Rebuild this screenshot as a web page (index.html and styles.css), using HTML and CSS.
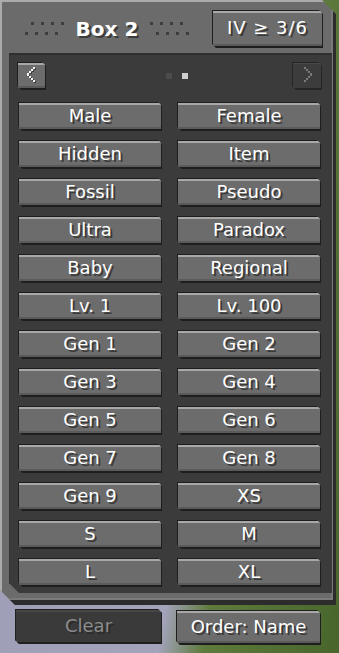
FILE: index.html
```html
<!DOCTYPE html>
<html lang="en">
<head>
    <meta charset="UTF-8">
    <meta name="viewport" content="width=device-width, initial-scale=1.0">
    <link rel="stylesheet" href="styles.css">
    <title>Box 2</title>
</head>
<body>
    <div class="panel">
        <div class="panel-head">
            <div class="title">
                <svg class="dots" width="40" height="16" viewBox="0 0 40 16">
                    <rect x="7" y="1" width="3" height="3"/><rect x="17" y="1" width="3" height="3"/>
                    <rect x="27" y="1" width="3" height="3"/><rect x="37" y="1" width="3" height="3"/>
                    <rect x="1" y="11" width="3" height="3"/><rect x="11" y="11" width="3" height="3"/>
                    <rect x="21" y="11" width="3" height="3"/><rect x="31" y="11" width="3" height="3"/>
                </svg>
                <span class="title-text">Box 2</span>
                <svg class="dots" width="40" height="16" viewBox="0 0 40 16">
                    <rect x="0" y="1" width="3" height="3"/><rect x="10" y="1" width="3" height="3"/>
                    <rect x="20" y="1" width="3" height="3"/><rect x="30" y="1" width="3" height="3"/>
                    <rect x="6" y="11" width="3" height="3"/><rect x="16" y="11" width="3" height="3"/>
                    <rect x="26" y="11" width="3" height="3"/><rect x="36" y="11" width="3" height="3"/>
                </svg>
            </div>
            <button class="btn iv-btn">IV ≥ 3/6</button>
        </div>

        <div class="box">
            <div class="nav">
                <button class="btn arrow">
                    <svg width="12" height="18" viewBox="0 0 12 18" shape-rendering="crispEdges">
                        <g fill="#3a3a3a">
                            <rect x="9" y="1" width="2" height="2"/><rect x="7" y="3" width="2" height="2"/>
                            <rect x="5" y="5" width="2" height="2"/><rect x="3" y="7" width="2" height="3"/>
                            <rect x="5" y="10" width="2" height="2"/><rect x="7" y="12" width="2" height="2"/>
                            <rect x="9" y="14" width="2" height="2"/>
                        </g>
                        <g fill="#f4f4f4">
                            <rect x="8" y="0" width="2" height="2"/><rect x="6" y="2" width="2" height="2"/>
                            <rect x="4" y="4" width="2" height="2"/><rect x="2" y="6" width="2" height="3"/>
                            <rect x="4" y="9" width="2" height="2"/><rect x="6" y="11" width="2" height="2"/>
                            <rect x="8" y="13" width="2" height="2"/>
                        </g>
                    </svg>
                </button>
                <div class="pages">
                    <span class="page"></span>
                    <span class="page current"></span>
                </div>
                <button class="btn arrow off">
                    <svg width="12" height="18" viewBox="0 0 12 18" shape-rendering="crispEdges">
                        <g fill="#7a7a7a">
                            <rect x="2" y="0" width="2" height="2"/><rect x="4" y="2" width="2" height="2"/>
                            <rect x="6" y="4" width="2" height="2"/><rect x="8" y="6" width="2" height="3"/>
                            <rect x="6" y="9" width="2" height="2"/><rect x="4" y="11" width="2" height="2"/>
                            <rect x="2" y="13" width="2" height="2"/>
                        </g>
                    </svg>
                </button>
            </div>

            <div class="filters">
                <button class="btn">Male</button>
                <button class="btn">Female</button>
                <button class="btn">Hidden</button>
                <button class="btn">Item</button>
                <button class="btn">Fossil</button>
                <button class="btn">Pseudo</button>
                <button class="btn">Ultra</button>
                <button class="btn">Paradox</button>
                <button class="btn">Baby</button>
                <button class="btn">Regional</button>
                <button class="btn">Lv. 1</button>
                <button class="btn">Lv. 100</button>
                <button class="btn">Gen 1</button>
                <button class="btn">Gen 2</button>
                <button class="btn">Gen 3</button>
                <button class="btn">Gen 4</button>
                <button class="btn">Gen 5</button>
                <button class="btn">Gen 6</button>
                <button class="btn">Gen 7</button>
                <button class="btn">Gen 8</button>
                <button class="btn">Gen 9</button>
                <button class="btn">XS</button>
                <button class="btn">S</button>
                <button class="btn">M</button>
                <button class="btn">L</button>
                <button class="btn">XL</button>
            </div>
        </div>
    </div>

    <div class="footer">
        <button class="btn big off">Clear</button>
        <button class="btn big">Order: Name</button>
    </div>
</body>
</html>
```

FILE: styles.css
```css
* {
    box-sizing: border-box;
}

body {
    margin: 0;
    width: 339px;
    height: 653px;
    overflow: hidden;
    font-family: "DejaVu Sans", "Liberation Sans", sans-serif;
    background: linear-gradient(100deg, #9c9cb6 0%, #a3a3bb 60%, #5e7a3c 70%, #48662c 100%);
}

.panel {
    width: 336px;
    height: 605px;
    background: #6b6b6b;
    box-shadow: inset 2px 2px #ababab, inset -3px -5px #2c2c2c, inset -5px -7px #7a7a7a;
    clip-path: polygon(0 0, 322px 0, 100% 14px, 100% 100%, 15px 100%, 0 calc(100% - 15px));
}

.panel-head {
    height: 53px;
    display: flex;
    align-items: flex-start;
    padding: 10px 0 0 0;
}

.title {
    width: 212px;
    display: flex;
    align-items: center;
    justify-content: center;
    gap: 12px;
    padding-top: 10px;
    padding-left: 2px;
}

.dots {
    fill: #3d3d3d;
}

.title-text {
    color: #fff;
    font-size: 20px;
    font-weight: bold;
    line-height: 18px;
    text-shadow: 2px 2px #3b3b3b;
}

.btn {
    display: flex;
    align-items: center;
    justify-content: center;
    margin: 0;
    padding: 0 0 2px 0;
    font-family: inherit;
    font-size: 18px;
    color: #fff;
    text-shadow: 2px 2px #3a3a3a;
    background: #6c6c6c;
    border: 1px solid #1e1e1e;
    border-bottom-width: 2px;
    box-shadow: inset 0 2px #a8a8a8, inset 0 -2px #5a5a5a;
    clip-path: polygon(0 0, calc(100% - 4px) 0, 100% 4px, 100% 100%, 4px 100%, 0 calc(100% - 4px));
    cursor: pointer;
}

.iv-btn {
    width: 111px;
    height: 38px;
    letter-spacing: 1px;
}

.box {
    margin-left: 9px;
    width: 323px;
    height: 540px;
    background: #3b3b3b;
    border-top: 2px solid #2e2e2e;
    border-left: 1px solid #333;
    padding: 7px 10px 6px 7px;
    clip-path: polygon(0 0, 100% 0, 100% 100%, 10px 100%, 0 calc(100% - 10px));
}

.nav {
    display: flex;
    align-items: center;
    justify-content: space-between;
    height: 28px;
    margin-bottom: 12px;
}

.arrow {
    width: 29px;
    height: 28px;
    padding: 0 1px 0 0;
}

.arrow.off {
    width: 30px;
    background: #3c3c3c;
    border-color: #252525;
    box-shadow: inset 0 1px #4a4a4a;
    padding: 0 0 0 2px;
}

.pages {
    display: flex;
    gap: 10px;
    margin-left: 16px;
}

.page {
    width: 6px;
    height: 6px;
    background: #4c4c4c;
}

.page.current {
    background: #cfcfcf;
}

.filters {
    display: grid;
    grid-template-columns: 144px 144px;
    grid-auto-rows: 29px;
    column-gap: 15px;
    row-gap: 9px;
    padding-left: 1px;
}

.footer {
    display: flex;
    padding: 4px 0 0 15px;
    gap: 14px;
    align-items: flex-start;
}

.big {
    height: 35px;
}

.big.off {
    width: 147px;
    margin-top: 0;
    color: #8b8b8b;
    text-shadow: 2px 2px #2a2a2a;
    background: #3a3a3a;
    border-color: #202020;
    box-shadow: inset 0 2px #474747;
}

.footer .btn:last-child {
    width: 145px;
    margin-top: 1px;
}
```
